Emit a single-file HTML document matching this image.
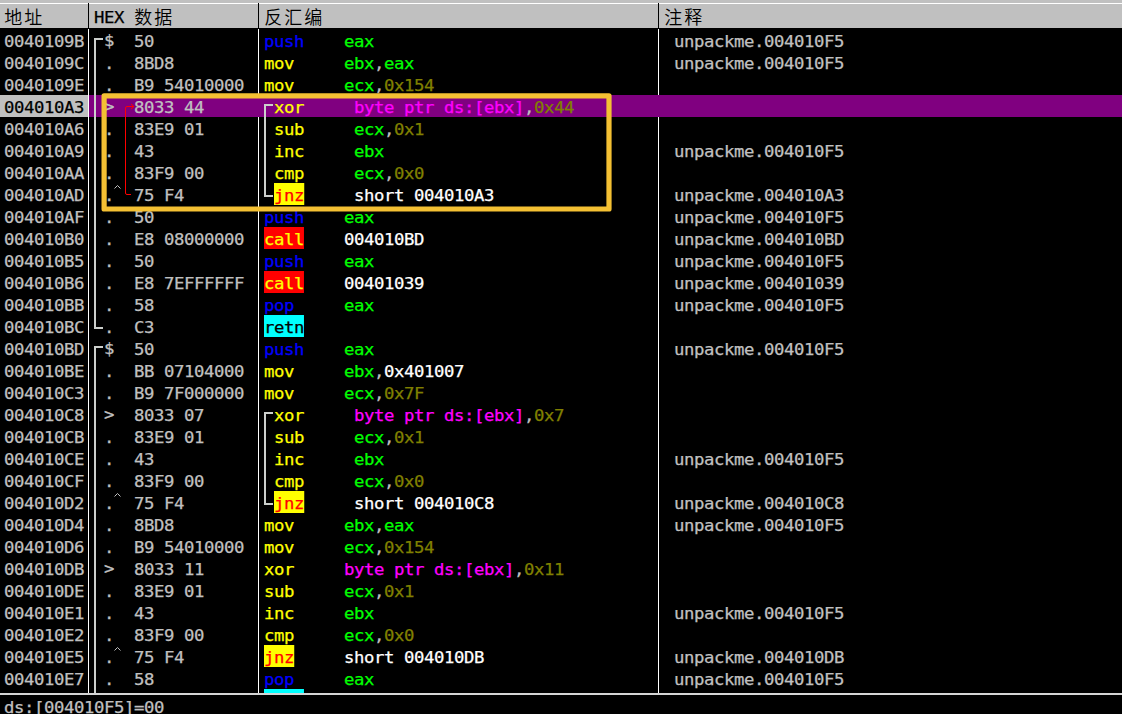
<!DOCTYPE html>
<html lang="zh-CN"><head><meta charset="utf-8"><title>unpackme - CPU</title>
<style>
html,body{margin:0;padding:0;background:#000;}
body{width:1122px;height:714px;position:relative;overflow:hidden;font-family:"DejaVu Sans Mono", "Liberation Mono", "Noto Sans CJK SC", monospace;font-size:16.0px;letter-spacing:-0.3735px;color:#c0c0c0;}
.hd{position:absolute;left:0;top:0;width:1122px;height:28px;background:#c0c0c0;}
.hl{position:absolute;left:0;top:3px;width:1122px;height:1px;background:#fff;}
.hs{position:absolute;top:3px;width:1px;height:25px;background:#000;}
.bs{position:absolute;top:29px;width:1px;height:664px;background:#fff;}
.ht{position:absolute;top:4px;height:24px;line-height:28px;color:#000;white-space:pre;}
.cj{font-family:"Liberation Mono","Noto Sans CJK SC",sans-serif;font-size:18px;letter-spacing:2px;font-weight:350;position:relative;top:0.5px;left:-0.7px;}
.r{position:absolute;left:0;width:1122px;height:22px;overflow:hidden;}
.t{position:absolute;top:0;height:22px;line-height:26px;white-space:pre;transform:scaleX(1.08);transform-origin:0 0;-webkit-text-stroke:0.25px;}
.sx{transform:scaleX(1.08);transform-origin:0 0;-webkit-text-stroke:0.25px;}
.ln{position:absolute;background:#d4d4d4;}
.st{position:absolute;left:0;top:695px;width:1122px;height:19px;overflow:hidden;}
</style></head><body>
<div class="hd"></div><div class="hl"></div><div class="hs" style="left:88px"></div><div class="bs" style="left:88px"></div><div class="hs" style="left:258px"></div><div class="bs" style="left:258px"></div><div class="hs" style="left:658px"></div><div class="bs" style="left:658px"></div><div class="ht" style="left:5px"><span class="cj">地址</span></div><div class="ht sx" style="left:94px">HEX</div><div class="ht" style="left:135px"><span class="cj">数据</span></div><div class="ht" style="left:265px"><span class="cj">反汇编</span></div><div class="ht" style="left:665px"><span class="cj">注释</span></div><div class="r" style="top:29px"><span class="t" style="left:3.5px;color:#c0c0c0;">0040109B</span><span class="t" style="left:103.5px;color:#c0c0c0;top:-1px;">$</span><span class="t" style="left:133.5px;color:#c0c0c0;">50</span><span class="t" style="left:263.5px;color:#0000ff;">push</span><span class="t" style="left:343.5px;color:#00ff00;">eax</span><span class="t" style="left:673.5px;color:#c0c0c0;">unpackme.004010F5</span></div><div class="r" style="top:51px"><span class="t" style="left:3.5px;color:#c0c0c0;">0040109C</span><span class="t" style="left:103.5px;color:#c0c0c0;">.</span><span class="t" style="left:133.5px;color:#c0c0c0;">8BD8</span><span class="t" style="left:263.5px;color:#ffff00;">mov</span><span class="t" style="left:343.5px;color:#00ff00;">ebx</span><span class="t" style="left:373.5px;color:#c0c0c0;">,</span><span class="t" style="left:383.5px;color:#00ff00;">eax</span><span class="t" style="left:673.5px;color:#c0c0c0;">unpackme.004010F5</span></div><div class="r" style="top:73px"><span class="t" style="left:3.5px;color:#c0c0c0;">0040109E</span><span class="t" style="left:103.5px;color:#c0c0c0;">.</span><span class="t" style="left:133.5px;color:#c0c0c0;">B9 54010000</span><span class="t" style="left:263.5px;color:#ffff00;">mov</span><span class="t" style="left:343.5px;color:#00ff00;">ecx</span><span class="t" style="left:373.5px;color:#c0c0c0;">,</span><span class="t" style="left:383.5px;color:#808000;">0x154</span></div><div class="r" style="top:95px"><span style="position:absolute;left:0;top:0;width:88px;height:22px;background:#c0c0c0"></span><span style="position:absolute;left:89px;top:0;width:1033px;height:22px;background:#800080"></span><span class="t" style="left:3.5px;color:#000;">004010A3</span><span class="t" style="left:103.5px;color:#c0c0c0;top:-1px;">&gt;</span><span class="t" style="left:133.5px;color:#c0c0c0;">8033 44</span><span class="t" style="left:273.5px;color:#ffff00;">xor</span><span class="t" style="left:353.5px;color:#ff00ff;">byte ptr ds:[ebx]</span><span class="t" style="left:523.5px;color:#c0c0c0;">,</span><span class="t" style="left:533.5px;color:#808000;">0x44</span></div><div class="r" style="top:117px"><span class="t" style="left:3.5px;color:#c0c0c0;">004010A6</span><span class="t" style="left:103.5px;color:#c0c0c0;">.</span><span class="t" style="left:133.5px;color:#c0c0c0;">83E9 01</span><span class="t" style="left:273.5px;color:#ffff00;">sub</span><span class="t" style="left:353.5px;color:#00ff00;">ecx</span><span class="t" style="left:383.5px;color:#c0c0c0;">,</span><span class="t" style="left:393.5px;color:#808000;">0x1</span></div><div class="r" style="top:139px"><span class="t" style="left:3.5px;color:#c0c0c0;">004010A9</span><span class="t" style="left:103.5px;color:#c0c0c0;">.</span><span class="t" style="left:133.5px;color:#c0c0c0;">43</span><span class="t" style="left:273.5px;color:#ffff00;">inc</span><span class="t" style="left:353.5px;color:#00ff00;">ebx</span><span class="t" style="left:673.5px;color:#c0c0c0;">unpackme.004010F5</span></div><div class="r" style="top:161px"><span class="t" style="left:3.5px;color:#c0c0c0;">004010AA</span><span class="t" style="left:103.5px;color:#c0c0c0;">.</span><span class="t" style="left:133.5px;color:#c0c0c0;">83F9 00</span><span class="t" style="left:273.5px;color:#ffff00;">cmp</span><span class="t" style="left:353.5px;color:#00ff00;">ecx</span><span class="t" style="left:383.5px;color:#c0c0c0;">,</span><span class="t" style="left:393.5px;color:#808000;">0x0</span></div><div class="r" style="top:183px"><span class="t" style="left:3.5px;color:#c0c0c0;">004010AD</span><span class="t" style="left:103.5px;color:#c0c0c0;">.</span><span class="t" style="left:133.5px;color:#c0c0c0;">75 F4</span><span class="t" style="left:274px;color:#ff0000;background:#ffff00;">jnz</span><span class="t" style="left:353.5px;color:#ffffff;">short 004010A3</span><span class="t" style="left:673.5px;color:#c0c0c0;">unpackme.004010A3</span></div><div class="r" style="top:205px"><span class="t" style="left:3.5px;color:#c0c0c0;">004010AF</span><span class="t" style="left:103.5px;color:#c0c0c0;">.</span><span class="t" style="left:133.5px;color:#c0c0c0;">50</span><span class="t" style="left:263.5px;color:#0000ff;">push</span><span class="t" style="left:343.5px;color:#00ff00;">eax</span><span class="t" style="left:673.5px;color:#c0c0c0;">unpackme.004010F5</span></div><div class="r" style="top:227px"><span class="t" style="left:3.5px;color:#c0c0c0;">004010B0</span><span class="t" style="left:103.5px;color:#c0c0c0;">.</span><span class="t" style="left:133.5px;color:#c0c0c0;">E8 08000000</span><span class="t" style="left:264px;color:#ffff00;background:#ff0000;">call</span><span class="t" style="left:343.5px;color:#ffffff;">004010BD</span><span class="t" style="left:673.5px;color:#c0c0c0;">unpackme.004010BD</span></div><div class="r" style="top:249px"><span class="t" style="left:3.5px;color:#c0c0c0;">004010B5</span><span class="t" style="left:103.5px;color:#c0c0c0;">.</span><span class="t" style="left:133.5px;color:#c0c0c0;">50</span><span class="t" style="left:263.5px;color:#0000ff;">push</span><span class="t" style="left:343.5px;color:#00ff00;">eax</span><span class="t" style="left:673.5px;color:#c0c0c0;">unpackme.004010F5</span></div><div class="r" style="top:271px"><span class="t" style="left:3.5px;color:#c0c0c0;">004010B6</span><span class="t" style="left:103.5px;color:#c0c0c0;">.</span><span class="t" style="left:133.5px;color:#c0c0c0;">E8 7EFFFFFF</span><span class="t" style="left:264px;color:#ffff00;background:#ff0000;">call</span><span class="t" style="left:343.5px;color:#ffffff;">00401039</span><span class="t" style="left:673.5px;color:#c0c0c0;">unpackme.00401039</span></div><div class="r" style="top:293px"><span class="t" style="left:3.5px;color:#c0c0c0;">004010BB</span><span class="t" style="left:103.5px;color:#c0c0c0;">.</span><span class="t" style="left:133.5px;color:#c0c0c0;">58</span><span class="t" style="left:263.5px;color:#0000ff;">pop</span><span class="t" style="left:343.5px;color:#00ff00;">eax</span><span class="t" style="left:673.5px;color:#c0c0c0;">unpackme.004010F5</span></div><div class="r" style="top:315px"><span class="t" style="left:3.5px;color:#c0c0c0;">004010BC</span><span class="t" style="left:103.5px;color:#c0c0c0;">.</span><span class="t" style="left:133.5px;color:#c0c0c0;">C3</span><span class="t" style="left:264px;color:#000;background:#00ffff;">retn</span></div><div class="r" style="top:337px"><span class="t" style="left:3.5px;color:#c0c0c0;">004010BD</span><span class="t" style="left:103.5px;color:#c0c0c0;top:-1px;">$</span><span class="t" style="left:133.5px;color:#c0c0c0;">50</span><span class="t" style="left:263.5px;color:#0000ff;">push</span><span class="t" style="left:343.5px;color:#00ff00;">eax</span><span class="t" style="left:673.5px;color:#c0c0c0;">unpackme.004010F5</span></div><div class="r" style="top:359px"><span class="t" style="left:3.5px;color:#c0c0c0;">004010BE</span><span class="t" style="left:103.5px;color:#c0c0c0;">.</span><span class="t" style="left:133.5px;color:#c0c0c0;">BB 07104000</span><span class="t" style="left:263.5px;color:#ffff00;">mov</span><span class="t" style="left:343.5px;color:#00ff00;">ebx</span><span class="t" style="left:373.5px;color:#c0c0c0;">,</span><span class="t" style="left:383.5px;color:#ffffff;">0x401007</span></div><div class="r" style="top:381px"><span class="t" style="left:3.5px;color:#c0c0c0;">004010C3</span><span class="t" style="left:103.5px;color:#c0c0c0;">.</span><span class="t" style="left:133.5px;color:#c0c0c0;">B9 7F000000</span><span class="t" style="left:263.5px;color:#ffff00;">mov</span><span class="t" style="left:343.5px;color:#00ff00;">ecx</span><span class="t" style="left:373.5px;color:#c0c0c0;">,</span><span class="t" style="left:383.5px;color:#808000;">0x7F</span></div><div class="r" style="top:403px"><span class="t" style="left:3.5px;color:#c0c0c0;">004010C8</span><span class="t" style="left:103.5px;color:#c0c0c0;top:-1px;">&gt;</span><span class="t" style="left:133.5px;color:#c0c0c0;">8033 07</span><span class="t" style="left:273.5px;color:#ffff00;">xor</span><span class="t" style="left:353.5px;color:#ff00ff;">byte ptr ds:[ebx]</span><span class="t" style="left:523.5px;color:#c0c0c0;">,</span><span class="t" style="left:533.5px;color:#808000;">0x7</span></div><div class="r" style="top:425px"><span class="t" style="left:3.5px;color:#c0c0c0;">004010CB</span><span class="t" style="left:103.5px;color:#c0c0c0;">.</span><span class="t" style="left:133.5px;color:#c0c0c0;">83E9 01</span><span class="t" style="left:273.5px;color:#ffff00;">sub</span><span class="t" style="left:353.5px;color:#00ff00;">ecx</span><span class="t" style="left:383.5px;color:#c0c0c0;">,</span><span class="t" style="left:393.5px;color:#808000;">0x1</span></div><div class="r" style="top:447px"><span class="t" style="left:3.5px;color:#c0c0c0;">004010CE</span><span class="t" style="left:103.5px;color:#c0c0c0;">.</span><span class="t" style="left:133.5px;color:#c0c0c0;">43</span><span class="t" style="left:273.5px;color:#ffff00;">inc</span><span class="t" style="left:353.5px;color:#00ff00;">ebx</span><span class="t" style="left:673.5px;color:#c0c0c0;">unpackme.004010F5</span></div><div class="r" style="top:469px"><span class="t" style="left:3.5px;color:#c0c0c0;">004010CF</span><span class="t" style="left:103.5px;color:#c0c0c0;">.</span><span class="t" style="left:133.5px;color:#c0c0c0;">83F9 00</span><span class="t" style="left:273.5px;color:#ffff00;">cmp</span><span class="t" style="left:353.5px;color:#00ff00;">ecx</span><span class="t" style="left:383.5px;color:#c0c0c0;">,</span><span class="t" style="left:393.5px;color:#808000;">0x0</span></div><div class="r" style="top:491px"><span class="t" style="left:3.5px;color:#c0c0c0;">004010D2</span><span class="t" style="left:103.5px;color:#c0c0c0;">.</span><span class="t" style="left:133.5px;color:#c0c0c0;">75 F4</span><span class="t" style="left:274px;color:#ff0000;background:#ffff00;">jnz</span><span class="t" style="left:353.5px;color:#ffffff;">short 004010C8</span><span class="t" style="left:673.5px;color:#c0c0c0;">unpackme.004010C8</span></div><div class="r" style="top:513px"><span class="t" style="left:3.5px;color:#c0c0c0;">004010D4</span><span class="t" style="left:103.5px;color:#c0c0c0;">.</span><span class="t" style="left:133.5px;color:#c0c0c0;">8BD8</span><span class="t" style="left:263.5px;color:#ffff00;">mov</span><span class="t" style="left:343.5px;color:#00ff00;">ebx</span><span class="t" style="left:373.5px;color:#c0c0c0;">,</span><span class="t" style="left:383.5px;color:#00ff00;">eax</span><span class="t" style="left:673.5px;color:#c0c0c0;">unpackme.004010F5</span></div><div class="r" style="top:535px"><span class="t" style="left:3.5px;color:#c0c0c0;">004010D6</span><span class="t" style="left:103.5px;color:#c0c0c0;">.</span><span class="t" style="left:133.5px;color:#c0c0c0;">B9 54010000</span><span class="t" style="left:263.5px;color:#ffff00;">mov</span><span class="t" style="left:343.5px;color:#00ff00;">ecx</span><span class="t" style="left:373.5px;color:#c0c0c0;">,</span><span class="t" style="left:383.5px;color:#808000;">0x154</span></div><div class="r" style="top:557px"><span class="t" style="left:3.5px;color:#c0c0c0;">004010DB</span><span class="t" style="left:103.5px;color:#c0c0c0;top:-1px;">&gt;</span><span class="t" style="left:133.5px;color:#c0c0c0;">8033 11</span><span class="t" style="left:263.5px;color:#ffff00;">xor</span><span class="t" style="left:343.5px;color:#ff00ff;">byte ptr ds:[ebx]</span><span class="t" style="left:513.5px;color:#c0c0c0;">,</span><span class="t" style="left:523.5px;color:#808000;">0x11</span></div><div class="r" style="top:579px"><span class="t" style="left:3.5px;color:#c0c0c0;">004010DE</span><span class="t" style="left:103.5px;color:#c0c0c0;">.</span><span class="t" style="left:133.5px;color:#c0c0c0;">83E9 01</span><span class="t" style="left:263.5px;color:#ffff00;">sub</span><span class="t" style="left:343.5px;color:#00ff00;">ecx</span><span class="t" style="left:373.5px;color:#c0c0c0;">,</span><span class="t" style="left:383.5px;color:#808000;">0x1</span></div><div class="r" style="top:601px"><span class="t" style="left:3.5px;color:#c0c0c0;">004010E1</span><span class="t" style="left:103.5px;color:#c0c0c0;">.</span><span class="t" style="left:133.5px;color:#c0c0c0;">43</span><span class="t" style="left:263.5px;color:#ffff00;">inc</span><span class="t" style="left:343.5px;color:#00ff00;">ebx</span><span class="t" style="left:673.5px;color:#c0c0c0;">unpackme.004010F5</span></div><div class="r" style="top:623px"><span class="t" style="left:3.5px;color:#c0c0c0;">004010E2</span><span class="t" style="left:103.5px;color:#c0c0c0;">.</span><span class="t" style="left:133.5px;color:#c0c0c0;">83F9 00</span><span class="t" style="left:263.5px;color:#ffff00;">cmp</span><span class="t" style="left:343.5px;color:#00ff00;">ecx</span><span class="t" style="left:373.5px;color:#c0c0c0;">,</span><span class="t" style="left:383.5px;color:#808000;">0x0</span></div><div class="r" style="top:645px"><span class="t" style="left:3.5px;color:#c0c0c0;">004010E5</span><span class="t" style="left:103.5px;color:#c0c0c0;">.</span><span class="t" style="left:133.5px;color:#c0c0c0;">75 F4</span><span class="t" style="left:264px;color:#ff0000;background:#ffff00;">jnz</span><span class="t" style="left:343.5px;color:#ffffff;">short 004010DB</span><span class="t" style="left:673.5px;color:#c0c0c0;">unpackme.004010DB</span></div><div class="r" style="top:667px"><span class="t" style="left:3.5px;color:#c0c0c0;">004010E7</span><span class="t" style="left:103.5px;color:#c0c0c0;">.</span><span class="t" style="left:133.5px;color:#c0c0c0;">58</span><span class="t" style="left:263.5px;color:#0000ff;">pop</span><span class="t" style="left:343.5px;color:#00ff00;">eax</span><span class="t" style="left:673.5px;color:#c0c0c0;">unpackme.004010F5</span></div><div class="r" style="top:689px;height:4px"><span class="t" style="left:3.5px;color:#c0c0c0;">004010E8</span><span class="t" style="left:103.5px;color:#c0c0c0;">.</span><span class="t" style="left:133.5px;color:#c0c0c0;">C3</span><span class="t" style="left:264px;color:#000;background:#00ffff;">retn</span></div><div class="ln" style="left:94px;top:38px;width:2px;height:291px;background:#cccfcc"></div><div class="ln" style="left:94px;top:38px;width:9px;height:2px;background:#cccfcc"></div><div class="ln" style="left:94px;top:327px;width:9px;height:2px;background:#cccfcc"></div><div class="ln" style="left:94px;top:346px;width:2px;height:347px;background:#cccfcc"></div><div class="ln" style="left:94px;top:346px;width:9px;height:2px;background:#cccfcc"></div><div class="ln" style="left:264px;top:104px;width:2px;height:93px;background:#cccfcc"></div><div class="ln" style="left:264px;top:104px;width:9px;height:2px;background:#cccfcc"></div><div class="ln" style="left:264px;top:195px;width:9px;height:2px;background:#cccfcc"></div><div class="ln" style="left:264px;top:412px;width:2px;height:93px;background:#cccfcc"></div><div class="ln" style="left:264px;top:412px;width:9px;height:2px;background:#cccfcc"></div><div class="ln" style="left:264px;top:503px;width:9px;height:2px;background:#cccfcc"></div><div style="position:absolute;left:0;top:693px;width:1122px;height:2px;background:#d4d4d4"></div><div class="st"><span class="t" style="left:3.5px;color:#c0c0c0;top:0px;">ds:[004010F5]=00</span></div><svg style="position:absolute;left:0;top:0" width="1122" height="714" viewBox="0 0 1122 714">
<path d="M131 194.5 L127 194.5 Q125.5 194.5 125.5 193 L125.5 108 Q125.5 106.5 127 106.5 L133.5 106.5" fill="none" stroke="#ff0000" stroke-width="1"/>
<path d="M131 104 L134 106.5 L131 109" fill="none" stroke="#ff0000" stroke-width="1"/>
<path d="M114.5 188.5 L117.5 185.5 L120.5 188.5" fill="none" stroke="#c0c0c0" stroke-width="1"/><path d="M114.5 496.5 L117.5 493.5 L120.5 496.5" fill="none" stroke="#c0c0c0" stroke-width="1"/><path d="M114.5 650.5 L117.5 647.5 L120.5 650.5" fill="none" stroke="#c0c0c0" stroke-width="1"/><rect x="104.1" y="95.8" width="504.9" height="113.2" fill="none" stroke="#f4c033" stroke-width="5.2" stroke-linejoin="round"/>
</svg></body></html>
